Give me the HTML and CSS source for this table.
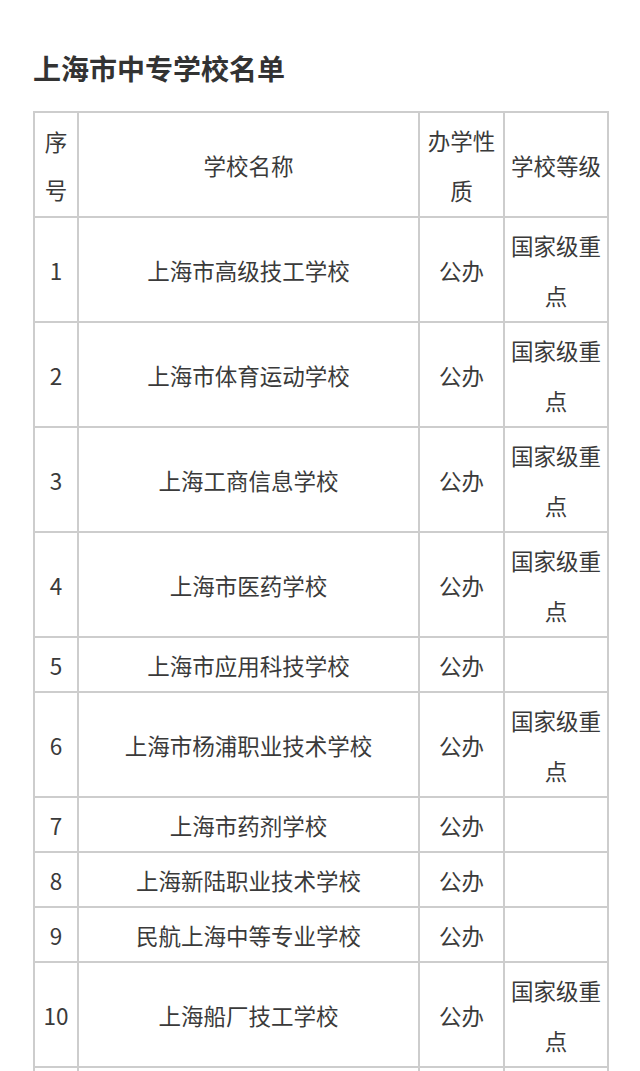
FILE: index.html
```html
<!DOCTYPE html>
<html lang="zh-CN">
<head>
<meta charset="utf-8">
<title>上海市中专学校名单</title>
<link rel="stylesheet" href="styles.css">
</head>
<body>
<div class="page">
  <h1 class="title">上海市中专学校名单</h1>
  <table class="list">
    <colgroup>
      <col class="c-no"><col class="c-name"><col class="c-type"><col class="c-level">
    </colgroup>
    <tr><td class="hd-no">序号</td><td>学校名称</td><td>办学性质</td><td>学校等级</td></tr>
    <tr><td>1</td><td>上海市高级技工学校</td><td>公办</td><td>国家级重点</td></tr>
    <tr><td>2</td><td>上海市体育运动学校</td><td>公办</td><td>国家级重点</td></tr>
    <tr><td>3</td><td>上海工商信息学校</td><td>公办</td><td>国家级重点</td></tr>
    <tr><td>4</td><td>上海市医药学校</td><td>公办</td><td>国家级重点</td></tr>
    <tr><td>5</td><td>上海市应用科技学校</td><td>公办</td><td></td></tr>
    <tr><td>6</td><td>上海市杨浦职业技术学校</td><td>公办</td><td>国家级重点</td></tr>
    <tr><td>7</td><td>上海市药剂学校</td><td>公办</td><td></td></tr>
    <tr><td>8</td><td>上海新陆职业技术学校</td><td>公办</td><td></td></tr>
    <tr><td>9</td><td>民航上海中等专业学校</td><td>公办</td><td></td></tr>
    <tr><td>10</td><td>上海船厂技工学校</td><td>公办</td><td>国家级重点</td></tr>
    <tr><td>11</td><td>上海市现代职业技术学校</td><td>公办</td><td>国家级重点</td></tr>
  </table>
</div>
</body>
</html>
```
FILE: styles.css
```css
html, body {
  margin: 0;
  padding: 0;
  background: #ffffff;
}
body {
  font-family: "Noto Sans CJK SC", "Noto Sans", sans-serif;
  color: #333333;
}
.page {
  padding: 47px 33px 0 33px;
}
.title {
  margin: 0 0 22px 0;
  font-size: 28px;
  line-height: 42px;
  font-weight: 700;
  color: #333333;
}
.list {
  width: 574px;
  border-collapse: collapse;
  table-layout: fixed;
  font-size: 22.5px;
  line-height: 50px;
  color: #3a3a3a;
}
.c-no { width: 44px; }
.c-name { width: 341px; }
.c-type { width: 85px; }
.c-level { width: 104px; }
.list td {
  border: 2px solid #cdcdcd;
  padding: 2px 3px 1px 3px;
  text-align: center;
  vertical-align: middle;
  word-break: break-all;
}
.list td.hd-no {
  line-height: 48px;
  padding-top: 3px;
  padding-bottom: 2px;
}
```
